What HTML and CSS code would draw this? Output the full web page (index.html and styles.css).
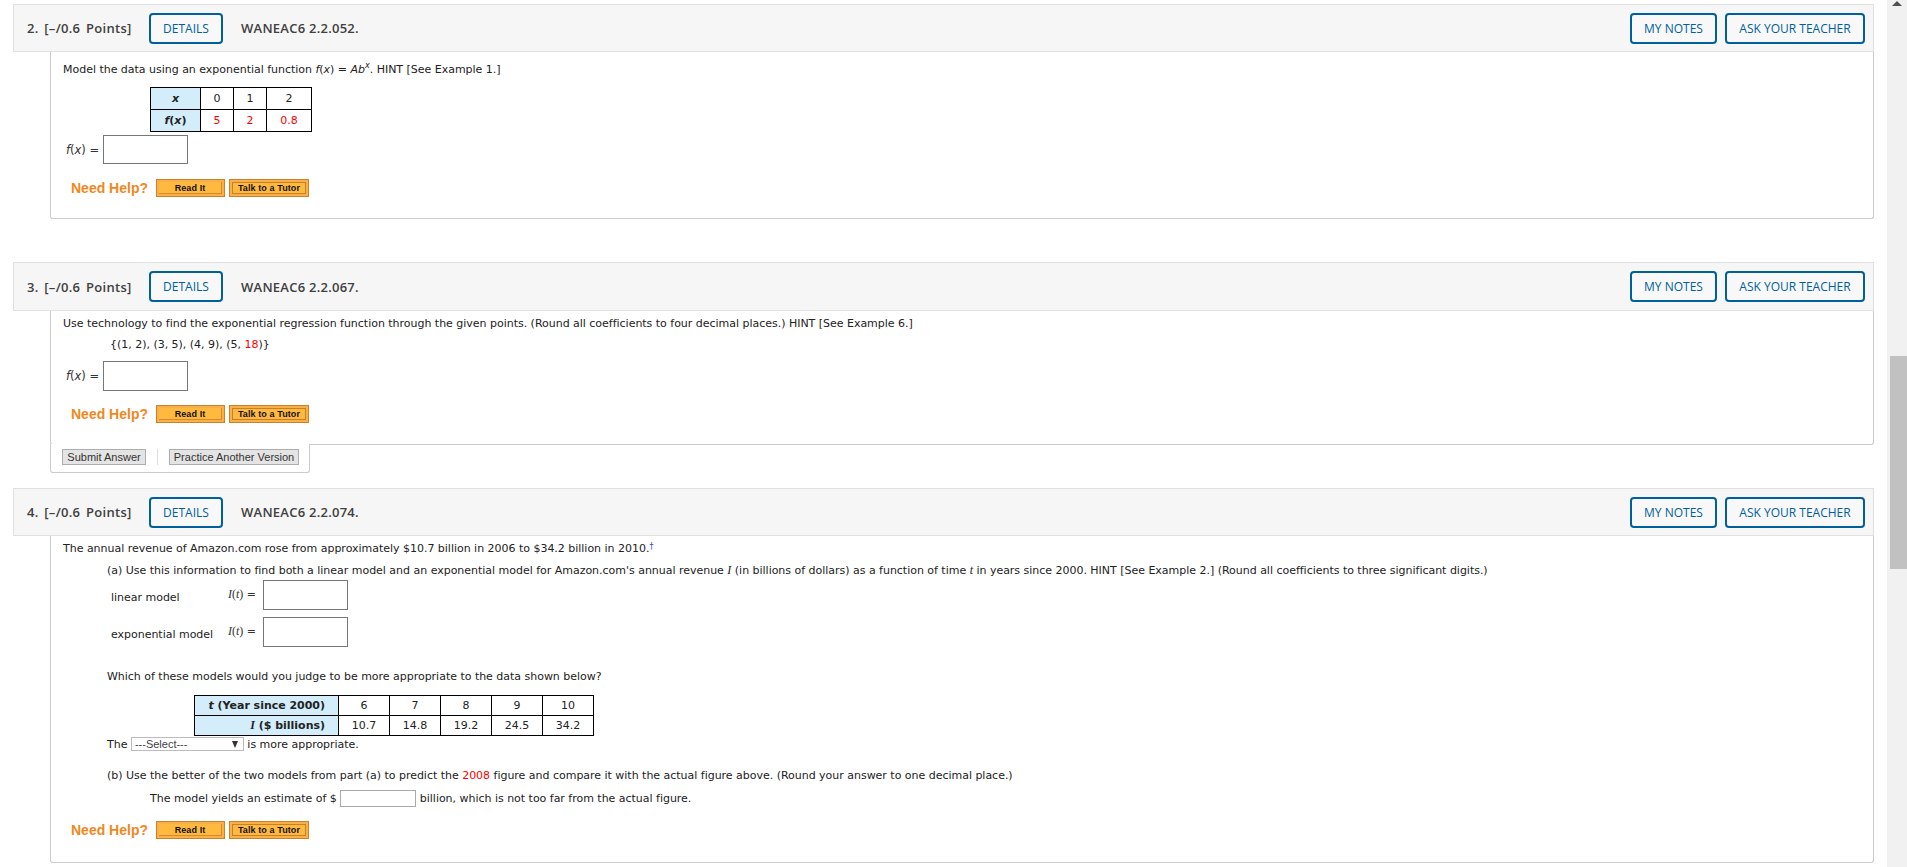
FILE: index.html
```html
<!DOCTYPE html>
<html lang="en">
<head>
<meta charset="utf-8">
<title>WANEAC6 assignment</title>
<link rel="stylesheet" href="styles.css">
</head>
<body>
<div class="page">
  <main class="content">

    <section class="question q1">
      <header class="qhead">
        <span class="points">2. [–/0.6 Points]</span>
        <a class="btn details">DETAILS</a>
        <span class="code">WANEAC6 2.2.052.</span>
        <span class="spacer"></span>
        <a class="btn notes">MY NOTES</a>
        <a class="btn ask">ASK YOUR TEACHER</a>
      </header>
      <div class="panel">
        <p class="line first-tall">Model the data using an exponential function <i>f</i>(<i>x</i>) = <i>Ab<sup>x</sup></i>. HINT [See Example 1.]</p>
        <table class="data t1">
          <tr><th><i>x</i></th><td class="c1">0</td><td class="c1">1</td><td class="c2">2</td></tr>
          <tr><th><i>f</i>(<i>x</i>)</th><td class="red">5</td><td class="red">2</td><td class="red">0.8</td></tr>
        </table>
        <div class="answer a1"><span class="fx"><i>f</i>(<i>x</i>) =</span><span class="box"></span></div>
        <div class="help h1"><span class="need">Need Help?</span><a class="orange read"><span>Read It</span></a><a class="orange talk"><span>Talk to a Tutor</span></a></div>
      </div>
    </section>

    <section class="question q2">
      <header class="qhead">
        <span class="points">3. [–/0.6 Points]</span>
        <a class="btn details">DETAILS</a>
        <span class="code">WANEAC6 2.2.067.</span>
        <span class="spacer"></span>
        <a class="btn notes">MY NOTES</a>
        <a class="btn ask">ASK YOUR TEACHER</a>
      </header>
      <div class="panel panel2">
        <p class="line">Use technology to find the exponential regression function through the given points. (Round all coefficients to four decimal places.) HINT [See Example 6.]</p>
        <p class="line points-set">{(1, 2), (3, 5), (4, 9), (5, <span class="redtxt">18</span>)}</p>
        <div class="answer a2"><span class="fx"><i>f</i>(<i>x</i>) =</span><span class="box"></span></div>
        <div class="help h2"><span class="need">Need Help?</span><a class="orange read"><span>Read It</span></a><a class="orange talk"><span>Talk to a Tutor</span></a></div>
      </div>
      <div class="tab">
        <a class="gray submit">Submit Answer</a>
        <span class="sep"></span>
        <a class="gray practice">Practice Another Version</a>
      </div>
    </section>

    <section class="question q3">
      <header class="qhead">
        <span class="points">4. [–/0.6 Points]</span>
        <a class="btn details">DETAILS</a>
        <span class="code">WANEAC6 2.2.074.</span>
        <span class="spacer"></span>
        <a class="btn notes">MY NOTES</a>
        <a class="btn ask">ASK YOUR TEACHER</a>
      </header>
      <div class="panel">
        <p class="line">The annual revenue of Amazon.com rose from approximately $10.7 billion in 2006 to $34.2 billion in 2010.<sup class="dagger">†</sup></p>
        <p class="line part parta">(a) Use this information to find both a linear model and an exponential model for Amazon.com's annual revenue <i class="serif">I</i> (in billions of dollars) as a function of time <i class="serif">t</i> in years since 2000. HINT [See Example 2.] (Round all coefficients to three significant digits.)</p>
        <div class="model m1"><span class="mlabel">linear model</span><span class="mfx"><span class="serif"><i>I</i>(<i>t</i>)</span> =</span><span class="box"></span></div>
        <div class="model m2"><span class="mlabel">exponential model</span><span class="mfx"><span class="serif"><i>I</i>(<i>t</i>)</span> =</span><span class="box"></span></div>
        <p class="line part which">Which of these models would you judge to be more appropriate to the data shown below?</p>
        <table class="data t2">
          <tr><th><i>t</i> (Year since 2000)</th><td>6</td><td>7</td><td>8</td><td>9</td><td>10</td></tr>
          <tr><th><i class="serif">I</i> ($ billions)</th><td>10.7</td><td>14.8</td><td>19.2</td><td>24.5</td><td>34.2</td></tr>
        </table>
        <div class="selectrow">The <span class="select"><span>---Select---</span><b class="caret"></b></span> is more appropriate.</div>
        <p class="line part partb">(b) Use the better of the two models from part (a) to predict the <span class="redtxt">2008</span> figure and compare it with the actual figure above. (Round your answer to one decimal place.)</p>
        <div class="yields">The model yields an estimate of $ <span class="box small"></span> billion, which is not too far from the actual figure.</div>
        <div class="help h3"><span class="need">Need Help?</span><a class="orange read"><span>Read It</span></a><a class="orange talk"><span>Talk to a Tutor</span></a></div>
      </div>
    </section>

  </main>
  <aside class="scrollbar" aria-hidden="true">
    <span class="arrow"></span>
    <span class="thumb"></span>
  </aside>
</div>
</body>
</html>
```

FILE: styles.css
```css
* { box-sizing: border-box; }
html, body { margin: 0; padding: 0; height: 100%; overflow: hidden; background: #fff; }
body { font-family: "DejaVu Sans", Verdana, sans-serif; font-size: 11px; color: #222; letter-spacing: -0.02px; }

.page { display: flex; width: 1907px; height: 867px; }
.content { flex: 1; min-width: 0; padding: 4px 13px 0 13px; overflow: hidden; }

.scrollbar { width: 20px; background: #f1f1f1; display: flex; flex-direction: column; align-items: center; }
.arrow { width: 0; height: 0; margin-top: 1px; border-left: 5px solid transparent; border-right: 5px solid transparent; border-bottom: 5px solid #505050; }
.thumb { width: 17px; height: 213px; margin: 350px 0 0 2px; background: #c1c1c1; }

.q2 { margin-top: 43px; }
.q3 { margin-top: 15px; }

.qhead { display: flex; align-items: center; height: 48px; padding: 0 8px 0 13px; background: #f6f6f6; border: 1px solid #e0e0e0; font-family: "Open Sans", sans-serif; font-size: 13px; font-weight: 600; color: #404040; }
.q2 .qhead { height: 49px; }
.points { width: 122px; white-space: nowrap; letter-spacing: 0.3px; word-spacing: 2px; }
.code { margin-left: 18px; white-space: nowrap; letter-spacing: 0.25px; }
.spacer { flex: 1; }

.btn { display: flex; align-items: center; justify-content: center; height: 31px; border: 2px solid #00609c; border-radius: 4px; background: #f8f8f8; color: #00609c; font-size: 12px; font-weight: 400; white-space: nowrap; letter-spacing: 0; }
.details { width: 74px; }
.notes { width: 87px; }
.ask { width: 140px; margin-left: 8px; }

.panel { display: flow-root; margin-left: 37px; padding: 0 0 0 12px; background: #fff; border: 1px solid #ccc; border-top: 0; border-radius: 0 0 3px 3px; }
.q1 .panel { height: 167px; }
.panel2 { height: 134px; }
.q3 .panel { height: 327px; }

.line { margin: 6px 0 0; height: 14px; line-height: 14px; white-space: nowrap; }
.first-tall { margin-top: 11px; }
.points-set { margin: 7px 0 0 47px; }
.part { margin: 8px 0 0 44px; }
.parta { margin-top: 7px; }
.which { margin-top: 23px; }
.partb { margin-top: 18px; }
sup { font-size: 8px; line-height: 0; }
.dagger { color: #3344dd; vertical-align: 3px; }
.redtxt { color: #f00; }
.serif { font-family: "Liberation Serif", serif; font-size: 12px; }

.data { border-collapse: collapse; table-layout: fixed; font-size: 11px; }
.data th, .data td { border: 1px solid #000; padding: 0; text-align: center; overflow: hidden; white-space: nowrap; }
.data th { background: #d4edfb; font-weight: 700; color: #222; }
.t1 { margin: 10px 0 0 87px; width: 161px; }
.t1 tr { height: 22px; }
.t1 th { width: 50px; }
.t1 td { width: 33px; }
.t1 td.c2 { width: 45px; }
.t2 { margin: 11px 0 0 131px; width: 400px; }
.t2 tr { height: 20px; }
.t2 th { width: 144px; text-align: right; padding-right: 13px; }
.t2 td { width: 51px; }
.red { color: #f00; }

.box { display: inline-block; width: 85px; height: 30px; border: 1px solid #777; background: #fff; }
.box.small { width: 76px; height: 17px; border-color: #aaa; vertical-align: middle; }

.answer { display: flex; align-items: center; margin-left: 3px; }
.a1 { margin-top: 3px; }
.a1 .box { height: 29px; }
.a2 { margin-top: 9px; }
.fx { width: 37px; color: #333; font-size: 11.5px; }

.help { display: flex; align-items: center; height: 18px; margin-left: 8px; }
.h1 { margin-top: 15px; }
.h2 { margin-top: 14px; }
.h3 { margin-top: 14px; }
.need { width: 85px; font-family: "Liberation Sans", Arial, sans-serif; font-size: 14px; font-weight: 700; color: #f0881c; white-space: nowrap; letter-spacing: 0; }

.orange { display: block; height: 18px; padding: 2px; background: #f7b04a; border: 1px solid #d0802a; font-family: "Liberation Sans", Arial, sans-serif; font-size: 9px; font-weight: 700; color: #111; letter-spacing: 0.1px; }
.orange span { display: flex; align-items: center; justify-content: center; height: 12px; background: #ffb93f; border-right: 1px solid #d98a28; border-bottom: 1px solid #d98a28; }
.talk span { border: 1px solid #c97f26; }
.read { width: 69px; margin-right: 4px; }
.talk { width: 80px; }

.tab { display: flex; align-items: center; width: 260px; height: 29px; margin: -1px 0 0 37px; padding: 0 0 2px 11px; background: #fff; border: 1px solid #ccc; border-top: 0; border-radius: 0 0 3px 3px; }
.gray { display: flex; align-items: center; justify-content: center; height: 16px; background: #e4e4e4; border: 1px solid #adadad; font-family: "Liberation Sans", Arial, sans-serif; font-size: 11px; color: #333; white-space: nowrap; letter-spacing: 0; }
.submit { width: 84px; }
.sep { width: 1px; height: 16px; margin: 0 11px 0 11px; background: #ddd; }
.practice { width: 130px; }

.model { display: flex; align-items: center; height: 30px; margin-left: 48px; }
.m1 { margin-top: 3px; }
.m2 { margin-top: 7px; }
.mlabel { width: 117px; padding-top: 4px; }
.mfx { width: 35px; padding-bottom: 2px; color: #333; white-space: nowrap; }

.selectrow { display: flex; align-items: center; height: 14px; margin: 1px 0 0 44px; white-space: pre; }
.select { display: flex; align-items: center; justify-content: space-between; width: 113px; height: 14px; padding: 0 5px 0 3px; background: #fff; border: 1px solid #bbb; font-family: "Liberation Sans", Arial, sans-serif; font-size: 11px; color: #444; letter-spacing: 0; }
.caret { width: 0; height: 0; border-left: 3px solid transparent; border-right: 3px solid transparent; border-top: 7px solid #333; }

.yields { display: flex; align-items: center; height: 17px; margin: 7px 0 0 87px; white-space: pre; }
```
